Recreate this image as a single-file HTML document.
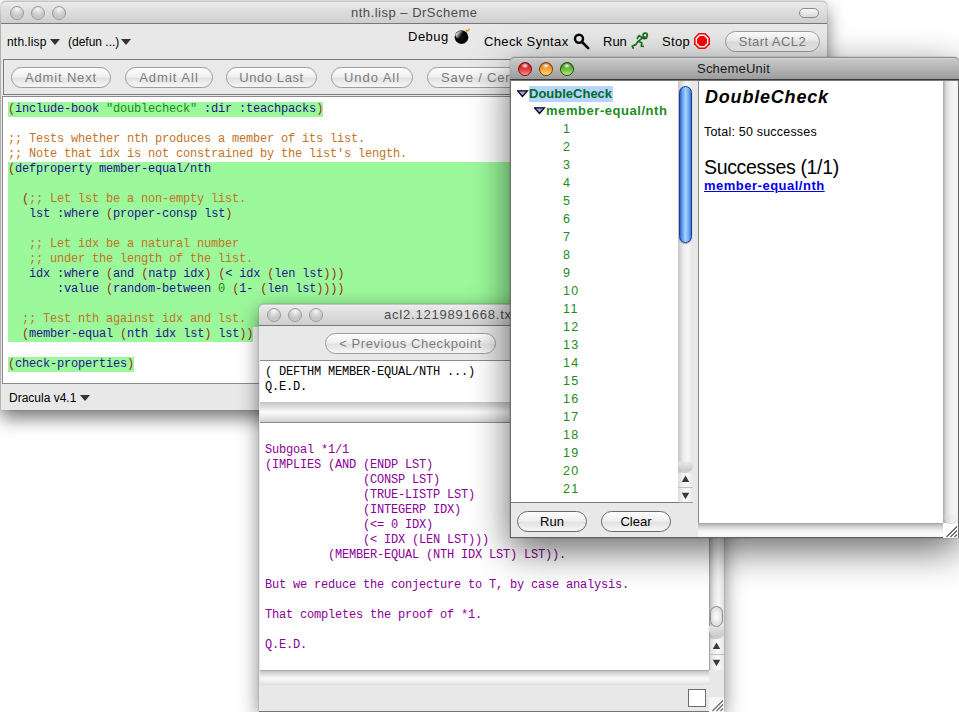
<!DOCTYPE html>
<html><head><meta charset="utf-8">
<style>
*{margin:0;padding:0;box-sizing:border-box}
html,body{width:959px;height:712px;overflow:hidden;background:#fff;position:relative;font-family:"Liberation Sans",sans-serif}
.L{position:absolute;left:0;top:0;width:0;height:0}
.a{position:absolute;white-space:pre}
.wbg{position:absolute;background:#e8e8e8;border-radius:5px 5px 0 0}
.tb{position:absolute;border-radius:5px 5px 0 0;border-top:1px solid #c2c2c2;border-bottom:1px solid #777;background:linear-gradient(#f3f3f3 0,#e9e9e9 1px,#dcdcdc 50%,#cecece)}
.tbact{border-top:1px solid #8c8c8c;background:linear-gradient(#e0e0e0 0,#c8c8c8 1px,#b4b4b4 50%,#9c9c9c);border-bottom:1px solid #3c3c3c}
.ttl{position:absolute;font-size:13px;color:#4c4c4c;white-space:pre}
.lt{position:absolute;width:14px;height:14px;border-radius:50%;border:1px solid #9a9a9a;background:radial-gradient(circle at 50% 18%,#f8f8f8 0,#dcdcdc 30%,#c4c4c4 65%,#d8d8d8 100%)}
.btn{position:absolute;border:1px solid #9d9d9d;border-radius:11px;background:linear-gradient(#fdfdfd,#f0f0f0 45%,#e2e2e2 55%,#f6f6f6);font-size:13px;color:#7d7d7d;white-space:pre}
.code{position:absolute;font-family:"Liberation Mono",monospace;font-size:12px;letter-spacing:-0.2px;line-height:15px;white-space:pre}
.p{color:#a02c16}.s{color:#1e168c}.c{color:#c2741f}.g{color:#228b22}
.hl{position:absolute;background:#9bf99b;height:15px}
.pu{color:#8c0098}
.gr{color:#228b22}
</style></head><body>

<!-- ============ DrScheme window ============ -->
<div class="L" style="z-index:1">
  <div class="wbg" style="left:1px;top:1px;width:826px;height:409px;box-shadow:0 8px 18px rgba(0,0,0,0.55),0 0 1px rgba(0,0,0,0.6)"></div>
  <div class="tb" style="left:1px;top:1px;width:826px;height:23px"></div>
  <div class="lt" style="left:10px;top:6px"></div>
  <div class="lt" style="left:31px;top:6px"></div>
  <div class="lt" style="left:52px;top:6px"></div>
  <div class="ttl" style="left:351px;top:5px;letter-spacing:0.5px">nth.lisp – DrScheme</div>
  <div class="a" style="left:799px;top:8px;width:20px;height:10px;border:1px solid #8a8a8a;border-radius:5px;background:linear-gradient(#f8f8f8,#d8d8d8)"></div>

  <!-- toolbar -->
  <div class="a" style="left:7px;top:35px;font-size:12px;letter-spacing:0.2px;color:#000">nth.lisp</div>
  <div class="a" style="left:50px;top:39px;width:0;height:0;border-left:5px solid transparent;border-right:5px solid transparent;border-top:6px solid #333"></div>
  <div class="a" style="left:68px;top:35px;font-size:12px;color:#000">(defun ...)</div>
  <div class="a" style="left:121px;top:39px;width:0;height:0;border-left:5px solid transparent;border-right:5px solid transparent;border-top:6px solid #333"></div>

  <div class="a" style="left:408px;top:29px;font-size:13px;letter-spacing:0.5px;color:#000">Debug</div>
  <div class="a" style="left:484px;top:34px;font-size:13px;letter-spacing:0.36px;color:#000">Check Syntax</div>
  <div class="a" style="left:603px;top:34px;font-size:13px;color:#000">Run</div>
  <div class="a" style="left:662px;top:34px;font-size:13px;letter-spacing:0.33px;color:#000">Stop</div>
  <svg class="a" style="left:452px;top:26px" width="20" height="20" viewBox="0 0 20 20">
    <defs><linearGradient id="bh" x1="0.2" y1="0.1" x2="0.6" y2="0.7"><stop offset="0" stop-color="#fff" stop-opacity="0.95"/><stop offset="1" stop-color="#fff" stop-opacity="0"/></linearGradient>
    <radialGradient id="bb" cx="0.5" cy="0.5" r="0.5"><stop offset="0" stop-color="#151515"/><stop offset="0.85" stop-color="#000"/><stop offset="1" stop-color="#333"/></radialGradient></defs>
    <circle cx="9.5" cy="11.2" r="6.9" fill="url(#bb)"/>
    <ellipse cx="8" cy="8.6" rx="4.6" ry="3.4" transform="rotate(-30 8 8.6)" fill="url(#bh)"/>
    <path d="M13.6 5.6 L15 4.4 L16 4.6 L17.6 3" stroke="#c9a227" stroke-width="1.6" fill="none"/>
  </svg>
  <svg class="a" style="left:570px;top:30px" width="24" height="22" viewBox="0 0 24 22">
    <circle cx="9" cy="8.8" r="4" stroke="#000" stroke-width="2.4" fill="none"/>
    <path d="M12 12 L18.2 18.2" stroke="#000" stroke-width="2.6" stroke-linecap="round"/>
  </svg>
  <svg class="a" style="left:628px;top:28px" width="24" height="24" viewBox="0 0 24 24">
    <g stroke="#1a6e1a" stroke-width="1.7" fill="none" stroke-linecap="round" stroke-linejoin="round">
      <circle cx="17.2" cy="7.2" r="2.1"/>
      <path d="M9.3 10.3 L11.2 7.6 L14.6 9.8 L10.3 13.3 L7.8 16.6 L4.2 18.2 L5.2 20"/>
      <path d="M14.6 9.8 L16.3 10.8 L18.5 10.2"/>
      <path d="M10.3 13.3 L13.8 14.8 L13.3 18.2 L15.2 18.3"/>
    </g>
  </svg>
  <svg class="a" style="left:694px;top:33px" width="16" height="16" viewBox="0 0 16 16">
    <path d="M4.7 0 H11.3 L16 4.7 V11.3 L11.3 16 H4.7 L0 11.3 V4.7 Z" fill="#f00"/>
    <path d="M5.3 1.6 H10.7 L14.4 5.3 V10.7 L10.7 14.4 H5.3 L1.6 10.7 V5.3 Z" fill="#fff"/>
    <path d="M5.9 3 H10.1 L13 5.9 V10.1 L10.1 13 H5.9 L3 10.1 V5.9 Z" fill="#f00"/>
  </svg>
  <div class="btn" style="left:725px;top:31px;width:95px;height:21px;line-height:19px;text-align:center;letter-spacing:0.44px">Start ACL2</div>

  <!-- button panel -->
  <div class="a" style="left:3px;top:59px;width:830px;height:36px;border:1px solid #7c7c7c;background:#e9e9e9"></div>
  <div class="btn" style="left:11px;top:67px;width:100px;height:21px;line-height:19px;text-align:center;letter-spacing:0.83px">Admit Next</div>
  <div class="btn" style="left:125px;top:67px;width:88px;height:21px;line-height:19px;text-align:center;letter-spacing:1px">Admit All</div>
  <div class="btn" style="left:226px;top:67px;width:91px;height:21px;line-height:19px;text-align:center;letter-spacing:0.58px">Undo Last</div>
  <div class="btn" style="left:331px;top:67px;width:82px;height:21px;line-height:19px;text-align:center;letter-spacing:0.97px">Undo All</div>
  <div class="btn" style="left:427px;top:67px;width:140px;height:21px;line-height:19px;padding-left:13px;letter-spacing:0.8px">Save / Certify</div>

  <!-- editor -->
  <div class="a" style="left:2px;top:96px;width:830px;height:288px;background:#fff;border-top:1px solid #8c8c8c;border-left:1px solid #8c8c8c;border-bottom:1px solid #8c8c8c"></div>
  <div class="hl" style="left:8px;top:102px;width:315px"></div>
  <div class="hl" style="left:8px;top:162px;width:830px;height:165px"></div>
  <div class="hl" style="left:8px;top:327px;width:245px"></div>
  <div class="hl" style="left:8px;top:357px;width:126px"></div>
  <div class="code" style="left:8px;top:102px"><span class="p">(</span><span class="s">include-book</span> <span class="g">"doublecheck"</span> <span class="s">:dir</span> <span class="s">:teachpacks</span><span class="p">)</span>

<span class="c">;; Tests whether nth produces a member of its list.</span>
<span class="c">;; Note that idx is not constrained by the list's length.</span>
<span class="p">(</span><span class="s">defproperty</span> <span class="s">member-equal/nth</span>

  <span class="p">(</span><span class="c">;; Let lst be a non-empty list.</span>
   <span class="s">lst</span> <span class="s">:where</span> <span class="p">(</span><span class="s">proper-consp</span> <span class="s">lst</span><span class="p">)</span>

   <span class="c">;; Let idx be a natural number</span>
   <span class="c">;; under the length of the list.</span>
   <span class="s">idx</span> <span class="s">:where</span> <span class="p">(</span><span class="s">and</span> <span class="p">(</span><span class="s">natp</span> <span class="s">idx</span><span class="p">)</span> <span class="p">(</span><span class="s">&lt;</span> <span class="s">idx</span> <span class="p">(</span><span class="s">len</span> <span class="s">lst</span><span class="p">)))</span>
       <span class="s">:value</span> <span class="p">(</span><span class="s">random-between</span> <span class="g">0</span> <span class="p">(</span><span class="s">1-</span> <span class="p">(</span><span class="s">len</span> <span class="s">lst</span><span class="p">))))</span>

  <span class="c">;; Test nth against idx and lst.</span>
  <span class="p">(</span><span class="s">member-equal</span> <span class="p">(</span><span class="s">nth</span> <span class="s">idx</span> <span class="s">lst</span><span class="p">)</span> <span class="s">lst</span><span class="p">))</span>

<span class="p">(</span><span class="s">check-properties</span><span class="p">)</span></div>

  <!-- status bar -->
  <div class="a" style="left:9px;top:391px;font-size:12px;color:#000">Dracula v4.1</div>
  <div class="a" style="left:80px;top:395px;width:0;height:0;border-left:5px solid transparent;border-right:5px solid transparent;border-top:6px solid #333"></div>
</div>

<!-- ============ acl2 window ============ -->
<div class="L" style="z-index:2">
  <div class="wbg" style="left:259px;top:304px;width:465px;height:407px;box-shadow:0 6px 20px rgba(0,0,0,0.5),0 0 1px rgba(0,0,0,0.7)"></div>
  <div class="tb" style="left:259px;top:304px;width:465px;height:22px"></div>
  <div class="lt" style="left:267px;top:308px"></div>
  <div class="lt" style="left:288px;top:308px"></div>
  <div class="lt" style="left:309px;top:308px"></div>
  <div class="ttl" style="left:384px;top:307px;letter-spacing:0.8px">acl2.1219891668.txt</div>
  <div class="a" style="left:259px;top:711px;width:465px;height:1px;background:#767676"></div>
  <div class="btn" style="left:325px;top:333px;width:171px;height:21px;line-height:19px;text-align:center;letter-spacing:0.58px">&lt; Previous Checkpoint</div>
  <!-- top text -->
  <div class="a" style="left:260px;top:360px;width:464px;height:42px;background:#fff;border-top:1px solid #8c8c8c"></div>
  <div class="code" style="left:265px;top:365px;color:#000">( DEFTHM MEMBER-EQUAL/NTH ...)
Q.E.D.</div>
  <div class="a" style="left:260px;top:402px;width:464px;height:21px;background:linear-gradient(#c4c4c4,#e4e4e4 30%,#fbfbfb 50%,#e8e8e8 75%,#d2d2d2);border-bottom:1px solid #8c8c8c"></div>
  <!-- lower text -->
  <div class="a" style="left:260px;top:423px;width:449px;height:247px;background:#fff"></div>
  <div class="code pu" style="left:265px;top:443px">Subgoal *1/1
(IMPLIES (AND (ENDP LST)
              (CONSP LST)
              (TRUE-LISTP LST)
              (INTEGERP IDX)
              (&lt;= 0 IDX)
              (&lt; IDX (LEN LST)))
         (MEMBER-EQUAL (NTH IDX LST) LST)).

But we reduce the conjecture to T, by case analysis.

That completes the proof of *1.

Q.E.D.</div>
  <!-- v scrollbar -->
  <div class="a" style="left:709px;top:423px;width:15px;height:247px;background:linear-gradient(90deg,#bdbdbd,#e6e6e6 30%,#f6f6f6 60%,#e2e2e2);border-left:1px solid #a0a0a0"></div>
  <div class="a" style="left:709px;top:626px;width:15px;height:12px;border-radius:0 0 8px 8px;background:linear-gradient(#e4e4e4,#c6c6c6);box-shadow:0 1px 1px rgba(0,0,0,0.2)"></div>
  <div class="a" style="left:710px;top:606px;width:13px;height:21px;border:1px solid #8a8a8a;border-radius:7px;background:radial-gradient(ellipse at 50% 50%,#ffffff 0,#f2f2f2 30%,#c8c8c8 100%)"></div>
  <div class="a" style="left:709px;top:639px;width:15px;height:31px;background:linear-gradient(90deg,#dcdcdc,#fafafa 50%,#e8e8e8);border-left:1px solid #a0a0a0"></div>
  <div class="a" style="left:709px;top:654px;width:15px;height:1px;background:#c0c0c0"></div>
  <svg class="a" style="left:712px;top:642px" width="9" height="8"><path d="M4.5 0.5 L8.2 7 L0.8 7 Z" fill="#3a3a3a"/></svg>
  <svg class="a" style="left:712px;top:659px" width="9" height="8"><path d="M0.8 0.8 L8.2 0.8 L4.5 7.2 Z" fill="#3a3a3a"/></svg>
  <!-- h band -->
  <div class="a" style="left:260px;top:670px;width:449px;height:15px;background:linear-gradient(#c6c6c6,#f4f4f4 45%,#f8f8f8 60%,#dedede);border-top:1px solid #aaa"></div>
  <div class="a" style="left:688px;top:689px;width:18px;height:18px;background:#fff;border:1px solid #6c6c6c"></div>
  <svg class="a" style="left:709px;top:697px" width="15" height="15"><rect width="15" height="15" fill="#f6f6f6"/><path d="M3.5 14 L14 3.5 M7.5 14 L14 7.5 M11.5 14 L14 11.5" stroke="#6a6a6a" stroke-width="1.1"/></svg>
</div>

<!-- ============ SchemeUnit window ============ -->
<div class="L" style="z-index:3">
  <div class="wbg" style="left:510px;top:57px;width:449px;height:481px;box-shadow:0 12px 38px rgba(0,0,0,0.6),0 0 1px rgba(0,0,0,0.8)"></div>
  <div class="tb tbact" style="left:510px;top:57px;width:449px;height:23px"></div>
  <div class="a" style="left:510px;top:80px;width:449px;height:1px;background:#7a7a7a"></div>
  <div class="a" style="left:958px;top:80px;width:1px;height:458px;background:#6a6a6a"></div>
  <div class="a" style="left:518px;top:62px;width:14px;height:14px;border-radius:50%;border:1px solid #6e1414;background:radial-gradient(ellipse 4px 3px at 50% 22%,rgba(255,255,255,0.95) 0,rgba(255,255,255,0) 100%),linear-gradient(#a81414,#e22222 35%,#ee5a5a 75%,#f7a4a4)"></div>
  <div class="a" style="left:539px;top:62px;width:14px;height:14px;border-radius:50%;border:1px solid #7a3a0c;background:radial-gradient(ellipse 4px 3px at 50% 22%,rgba(255,255,255,0.95) 0,rgba(255,255,255,0) 100%),linear-gradient(#b85a14,#ee8e2e 35%,#f9c24c 75%,#fde27a)"></div>
  <div class="a" style="left:560px;top:62px;width:14px;height:14px;border-radius:50%;border:1px solid #1e4e10;background:radial-gradient(ellipse 4px 3px at 50% 22%,rgba(255,255,255,0.95) 0,rgba(255,255,255,0) 100%),linear-gradient(#2e7014,#58ac2c 35%,#8ed25a 75%,#bfe88e)"></div>
  <div class="ttl" style="left:697px;top:61px;letter-spacing:0.22px;color:#1a1a1a">SchemeUnit</div>

  <!-- tree panel -->
  <div class="a" style="left:510px;top:80px;width:1px;height:458px;background:#6e6e6e"></div>
  <div class="a" style="left:511px;top:81px;width:167px;height:422px;background:#fff;border-bottom:1px solid #7a7a7a"></div>
  <div class="a" style="left:529px;top:86px;width:84px;height:16px;background:#b5d5ff"></div>
  <svg class="a" style="left:517px;top:90px" width="12" height="8"><path d="M0.5 0.8 L10.5 0.8 L5.5 6.5 Z" fill="#9c9cf6" stroke="#000" stroke-width="1.2"/></svg>
  <svg class="a" style="left:534px;top:107px" width="12" height="8"><path d="M0.5 0.8 L10.5 0.8 L5.5 6.5 Z" fill="#9c9cf6" stroke="#000" stroke-width="1.2"/></svg>
  <div class="a" style="left:529px;top:86px;font-size:13px;font-weight:bold;color:#006a2a">DoubleCheck</div>
  <div class="a" style="left:546px;top:103px;font-size:13px;letter-spacing:0.55px;font-weight:bold;color:#1e8c1e">member-equal/nth</div>
  <div class="a gr" style="left:563px;top:120px;font-size:12.5px;letter-spacing:1.4px;line-height:18px">1
2
3
4
5
6
7
8
9
10
11
12
13
14
15
16
17
18
19
20
21</div>
  <!-- scrollbar -->
  <div class="a" style="left:678px;top:81px;width:15px;height:422px;border-bottom:1px solid #9a9a9a;background:linear-gradient(90deg,#c4c4c4,#ebebeb 35%,#f7f7f7 65%,#e4e4e4)"></div>
  <div class="a" style="left:679px;top:86px;width:13px;height:157px;border-radius:7px;border:1px solid #1a3c98;background:linear-gradient(90deg,#2d63cc,#6aa6f2 25%,#a6d2fc 50%,#76b2f4 75%,#3a72d8);box-shadow:0 1px 1px rgba(0,0,0,0.35)"></div>
  <div class="a" style="left:678px;top:462px;width:15px;height:10px;border-radius:0 0 8px 8px;background:linear-gradient(#e6e6e6,#c8c8c8);box-shadow:0 1px 1px rgba(0,0,0,0.2)"></div>
  <div class="a" style="left:678px;top:473px;width:15px;height:30px;background:linear-gradient(90deg,#dcdcdc,#fafafa 50%,#e8e8e8);border-bottom:1px solid #9a9a9a"></div>
  <div class="a" style="left:678px;top:487px;width:15px;height:1px;background:#c0c0c0"></div>
  <svg class="a" style="left:681px;top:475px" width="9" height="8"><path d="M4.5 0.5 L8.2 7 L0.8 7 Z" fill="#3a3a3a"/></svg>
  <svg class="a" style="left:681px;top:492px" width="9" height="8"><path d="M0.8 0.8 L8.2 0.8 L4.5 7.2 Z" fill="#3a3a3a"/></svg>
  <!-- buttons -->
  <div class="btn" style="left:517px;top:511px;width:70px;height:21px;line-height:19px;text-align:center;color:#000;border-color:#6a6a6a">Run</div>
  <div class="btn" style="left:601px;top:511px;width:70px;height:21px;line-height:19px;text-align:center;color:#000;border-color:#6a6a6a">Clear</div>

  <!-- right panel -->
  <div class="a" style="left:698px;top:81px;width:245px;height:442px;background:#fff;border-left:1px solid #8a8a8a"></div>
  <div class="a" style="left:705px;top:87px;font-size:18px;letter-spacing:0.8px;font-weight:bold;font-style:italic;color:#000">DoubleCheck</div>
  <div class="a" style="left:704px;top:125px;font-size:12.5px;letter-spacing:0.2px;color:#000">Total: 50 successes</div>
  <div class="a" style="left:704px;top:156px;font-size:19.5px;letter-spacing:-0.33px;color:#000">Successes (1/1)</div>
  <div class="a" style="left:704px;top:178px;font-size:13px;font-weight:bold;letter-spacing:0.5px;color:#0000ee;text-decoration:underline">member-equal/nth</div>
  <div class="a" style="left:943px;top:81px;width:15px;height:442px;background:linear-gradient(90deg,#a8a8a8,#d8d8d8 20%,#ececec 45%,#f6f6f6 75%,#efefef)"></div>
  <div class="a" style="left:698px;top:523px;width:245px;height:14px;background:linear-gradient(#b4b4b4,#d6d6d6 25%,#f4f4f4 55%,#fafafa 85%,#f2f2f2);border-top:1px solid #a8a8a8"></div>
  <div class="a" style="left:510px;top:537px;width:449px;height:1px;background:#626262"></div>
  <svg class="a" style="left:943px;top:523px" width="15" height="15"><rect width="15" height="15" fill="#fdfdfd"/><path d="M3.5 14 L14 3.5 M7.5 14 L14 7.5 M11.5 14 L14 11.5" stroke="#555" stroke-width="1.1"/></svg>
  <div class="a" style="left:943px;top:515px;width:15px;height:8px;border-radius:0 0 7px 7px;background:linear-gradient(90deg,#b8b8b8,#dcdcdc 25%,#eeeeee 60%,#f2f2f2);box-shadow:0 1px 1px rgba(0,0,0,0.15)"></div>
</div>

</body></html>
